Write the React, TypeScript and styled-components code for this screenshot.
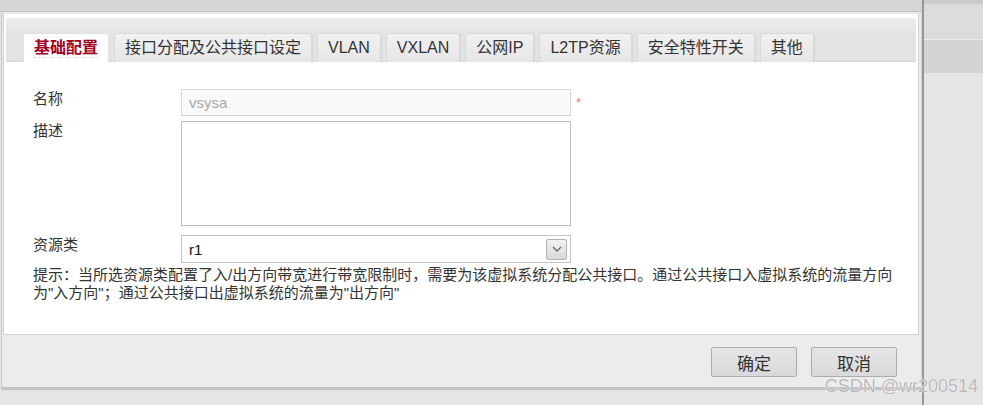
import React from "react";
import styled, { createGlobalStyle } from "styled-components";

const Global = createGlobalStyle`
  html, body { margin: 0; padding: 0; }
  body {
    background: #e5e5e5;
    font-family: "Liberation Sans", "Noto Sans CJK SC", sans-serif;
    color: #333;
  }
  * { box-sizing: border-box; }
`;

const Screen = styled.div`
  position: relative;
  display: flex;
  width: 983px;
  height: 405px;
  overflow: hidden;
  background: #e5e5e5;
`;

const LeftArea = styled.div`
  width: 922px;
  display: flex;
  flex-direction: column;
`;

const TopStrip = styled.div`
  height: 12px;
  background: #d6d6d6;
  border-bottom: 1px solid #c3c3c3;
`;

const Dialog = styled.div`
  margin-left: 1px;
  width: 921px;
  background: #ececec;
  border-left: 1px solid #c9c9c9;
  border-right: 1px solid #d2d2d2;
  border-bottom: 3px solid #c2c2c2;
  border-radius: 0 0 2px 2px;
  padding: 1px 2px 0 1px;
  display: flex;
  flex-direction: column;
`;

const Panel = styled.div`
  height: 322px;
  background: #fff;
  border: 1px solid #d0d0d0;
  border-top-color: #e6e6e6;
  padding: 4px 2px 0;
  display: flex;
  flex-direction: column;
`;

const TabBar = styled.div`
  height: 44px;
  display: flex;
  align-items: flex-end;
  gap: 5px;
  padding-left: 17px;
  background: linear-gradient(#eeeeee, #e3e3e3 40%, #e3e3e3);
  box-shadow: inset 0 -1px 0 #d8d8d8;
`;

const Tab = styled.div<{ $active?: boolean }>`
  height: 29px;
  padding: 0 10px;
  display: flex;
  align-items: center;
  font-size: 16px;
  white-space: nowrap;
  border: 1px solid ${(p) => (p.$active ? "#e2e2e2" : "#d9d9d9")};
  border-bottom: none;
  border-radius: 3px 3px 0 0;
  background: ${(p) =>
    p.$active ? "#ffffff" : "linear-gradient(#f1f1f1, #e6e6e6)"};
  color: ${(p) => (p.$active ? "#a3001f" : "#333")};
  font-weight: ${(p) => (p.$active ? 700 : 400)};
  box-shadow: ${(p) => (p.$active ? "none" : "1px 0 1px rgba(0,0,0,0.05)")};
`;

const TabLabel = styled.span<{ $active?: boolean }>`
  border-bottom: 1px dotted ${(p) => (p.$active ? "#f3c2ca" : "transparent")};
  line-height: 18px;
`;

const Form = styled.div`
  padding: 27px 20px 0 27px;
  display: flex;
  flex-direction: column;
`;

const Field = styled.div<{ $gap?: number }>`
  display: grid;
  grid-template-columns: 148px 390px auto;
  align-items: start;
  margin-top: ${(p) => p.$gap ?? 0}px;
`;

const Label = styled.div`
  font-size: 15px;
  line-height: 20px;
  color: #333;
`;

const TextInput = styled.div`
  height: 27px;
  border: 1px solid #d6d6d6;
  background: #fafafa;
  color: #a8a8a8;
  font-size: 15px;
  line-height: 25px;
  padding-left: 7px;
`;

const Required = styled.span`
  color: #f07878;
  font-size: 13px;
  line-height: 20px;
  padding: 4px 0 0 5px;
`;

const TextArea = styled.div`
  height: 105px;
  border: 1px solid #bdbdbd;
  background: #fff;
`;

const Select = styled.div`
  height: 28px;
  border: 1px solid #c4c4c4;
  background: #fff;
  display: flex;
  align-items: center;
  justify-content: space-between;
  padding: 0 3px 0 7px;
  font-size: 15px;
  color: #111;
`;

const SelectArrow = styled.div`
  width: 21px;
  height: 21px;
  border: 1px solid #b3b3b3;
  border-radius: 2px;
  background: linear-gradient(#f2f2f2, #d9d9d9);
  display: flex;
  align-items: center;
  justify-content: center;
`;

const Hint = styled.div`
  margin-top: 3px;
  font-size: 15px;
  line-height: 18px;
  color: #333;
  white-space: nowrap;
`;

const Footer = styled.div`
  height: 52px;
  display: flex;
  justify-content: flex-end;
  align-items: flex-start;
  gap: 14px;
  padding: 12px 22px 0 0;
`;

const Button = styled.button`
  width: 86px;
  height: 30px;
  border: 1px solid #adadad;
  border-radius: 2px;
  background: linear-gradient(#e6e6e6, #d9d9d9);
  font-family: "Liberation Sans", "Noto Sans CJK SC", sans-serif;
  font-size: 17px;
  color: #333;
  padding: 0;
`;

const Separator = styled.div`
  width: 2px;
  background: #979797;
`;

const RightPanel = styled.div`
  flex: 1;
  display: flex;
  flex-direction: column;
  background: #e5e5e5;
`;

const Band = styled.div<{ $h: number; $bg: string; $line?: string }>`
  height: ${(p) => p.$h}px;
  background: ${(p) => p.$bg};
  border-bottom: ${(p) => (p.$line ? `1px solid ${p.$line}` : "none")};
`;

const Watermark = styled.div`
  position: absolute;
  right: 5px;
  bottom: 9px;
  font-family: "Liberation Sans", sans-serif;
  font-size: 18px;
  line-height: 20px;
  color: #b9b9b9;
  text-shadow: 0 0 1px #ffffff, 0 0 1px #ffffff;
`;

const tabs = [
  "基础配置",
  "接口分配及公共接口设定",
  "VLAN",
  "VXLAN",
  "公网IP",
  "L2TP资源",
  "安全特性开关",
  "其他",
];

export default function App() {
  return (
    <>
      <Global />
      <Screen>
        <LeftArea>
          <TopStrip />
          <Dialog>
            <Panel>
              <TabBar>
                {tabs.map((t, i) => (
                  <Tab key={t} $active={i === 0}>
                    <TabLabel $active={i === 0}>{t}</TabLabel>
                  </Tab>
                ))}
              </TabBar>
              <Form>
                <Field>
                  <Label>名称</Label>
                  <TextInput>vsysa</TextInput>
                  <Required>*</Required>
                </Field>
                <Field $gap={5}>
                  <Label>描述</Label>
                  <TextArea />
                </Field>
                <Field $gap={9}>
                  <Label>资源类</Label>
                  <Select>
                    <span>r1</span>
                    <SelectArrow>
                      <svg width="10" height="6" viewBox="0 0 10 6">
                        <path
                          d="M1 1 L5 5 L9 1"
                          fill="none"
                          stroke="#6a6a6a"
                          strokeWidth="1.4"
                        />
                      </svg>
                    </SelectArrow>
                  </Select>
                </Field>
                <Hint>
                  提示：当所选资源类配置了入/出方向带宽进行带宽限制时，需要为该虚拟系统分配公共接口。通过公共接口入虚拟系统的流量方向
                  <br />
                  为"入方向"；通过公共接口出虚拟系统的流量为"出方向"
                </Hint>
              </Form>
            </Panel>
            <Footer>
              <Button>确定</Button>
              <Button>取消</Button>
            </Footer>
          </Dialog>
        </LeftArea>
        <Separator />
        <RightPanel>
          <Band $h={4} $bg="#cbcbcb" />
          <Band $h={36} $bg="#dcdcdc" $line="#ececec" />
          <Band $h={33} $bg="#d4d4d4" />
        </RightPanel>
        <Watermark>CSDN @wr200514</Watermark>
      </Screen>
    </>
  );
}
